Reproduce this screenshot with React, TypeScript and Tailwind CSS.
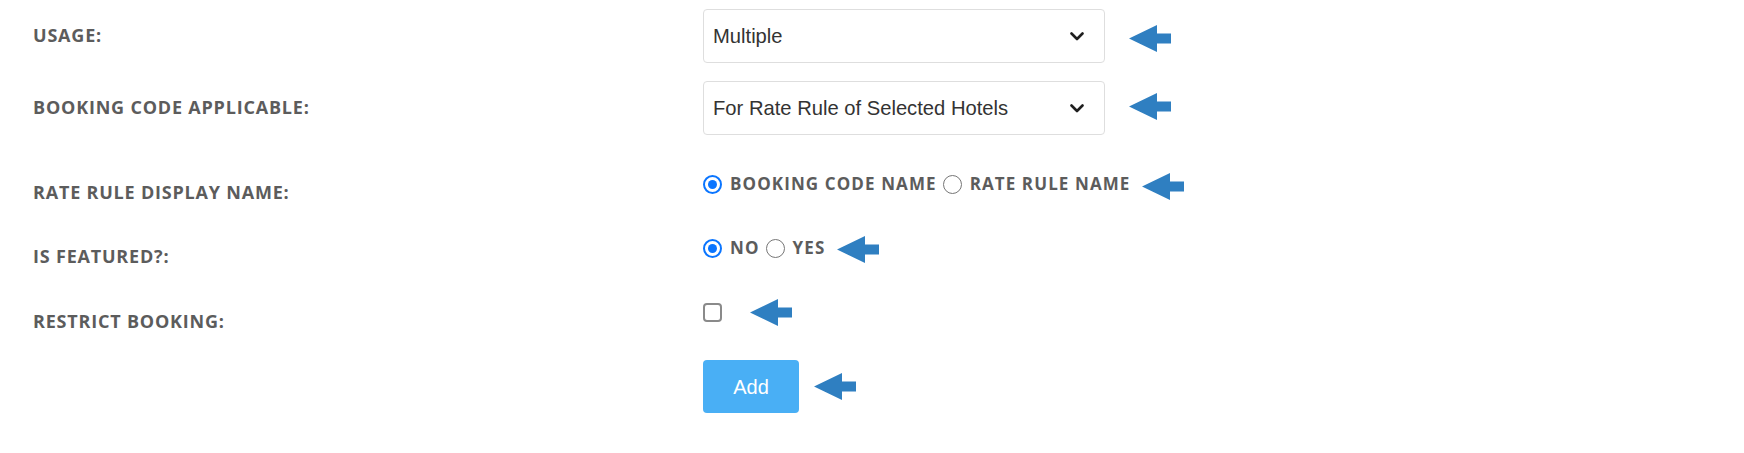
import { FC, ReactNode } from "react";

const Arrow: FC<{ className?: string }> = ({ className }) => (
  <svg width="42" height="27" viewBox="0 0 42 27" className={className}>
    <polygon points="0,13.5 28,0 28,8.5 42,8.5 42,18.5 28,18.5 28,27" fill="#2f7fc1" />
  </svg>
);

const Chevron = () => (
  <svg width="14" height="9" viewBox="0 0 14 9">
    <path d="M1.5 1.5 L7 7 L12.5 1.5" fill="none" stroke="#1f1f1f" strokeWidth="2.6" strokeLinecap="round" strokeLinejoin="round" />
  </svg>
);

const Radio: FC<{ checked?: boolean }> = ({ checked }) =>
  checked ? (
    <span className="flex h-[19px] w-[19px] shrink-0 items-center justify-center rounded-full border-[2px] border-[#0a75ff] bg-white">
      <span className="h-[9px] w-[9px] rounded-full bg-[#0a75ff]" />
    </span>
  ) : (
    <span className="h-[19px] w-[19px] shrink-0 rounded-full border-[1.5px] border-[#767676] bg-white" />
  );

const Label: FC<{ children: ReactNode; className?: string }> = ({ children, className }) => (
  <div className={`w-[670px] shrink-0 text-[18px] font-bold uppercase leading-6 tracking-[0.8px] text-[#5c5c5c] ${className ?? ""}`}>
    {children}
  </div>
);

const Select: FC<{ value: string }> = ({ value }) => (
  <div className="flex h-[54px] w-[402px] items-center justify-between rounded-[4px] border border-[#dedede] bg-white pl-[9px] pr-[20px] font-['Liberation_Sans',Arial,sans-serif] text-[20.2px] text-[#333]">
    <span>{value}</span>
    <Chevron />
  </div>
);

const Option: FC<{ checked?: boolean; text: string }> = ({ checked, text }) => (
  <span className="flex items-center">
    <Radio checked={checked} />
    <span className="ml-[8px] mr-[6px] text-[17px] font-bold uppercase tracking-[1.1px] text-[#5c5c5c]">{text}</span>
  </span>
);

export default function App() {
  return (
    <div className="min-h-screen bg-white pl-[33px] pt-[9px] font-['Open_Sans',sans-serif]">
      <div className="flex h-[54px] items-center">
        <Label className="pb-[3px]">Usage:</Label>
        <Select value="Multiple" />
        <Arrow className="ml-[24px] mt-[4px]" />
      </div>

      <div className="mt-[18px] flex h-[54px] items-center">
        <Label className="pb-[3px]">Booking Code Applicable:</Label>
        <Select value="For Rate Rule of Selected Hotels" />
        <Arrow className="ml-[24px] -mt-[3px]" />
      </div>

      <div className="mt-[37px] flex items-start">
        <Label className="pt-[8px]">Rate Rule Display Name:</Label>
        <div className="flex h-6 items-center">
          <Option checked text="Booking Code Name" />
          <Option text="Rate Rule Name" />
          <Arrow className="ml-[5px] mt-[4px]" />
        </div>
      </div>

      <div className="mt-[32px] flex items-start">
        <Label className="pt-[8px]">Is Featured?:</Label>
        <div className="flex h-6 items-center">
          <Option checked text="No" />
          <Option text="Yes" />
          <Arrow className="ml-[6px] mt-[2px]" />
        </div>
      </div>

      <div className="mt-[32px] flex items-start">
        <Label className="pt-[9px]">Restrict Booking:</Label>
        <div className="flex h-6 items-center">
          <span className="h-[19px] w-[19px] rounded-[4px] border-[2px] border-[#8a8a8a] bg-white" />
          <Arrow className="ml-[28px] mt-[1px]" />
        </div>
      </div>

      <div className="mt-[27px] flex items-center">
        <div className="w-[670px] shrink-0" />
        <button className="h-[53px] w-[96px] rounded-[4px] bg-[#49aff5] font-['Liberation_Sans',Arial,sans-serif] text-[20px] text-white">
          Add
        </button>
        <Arrow className="ml-[15px]" />
      </div>
    </div>
  );
}
